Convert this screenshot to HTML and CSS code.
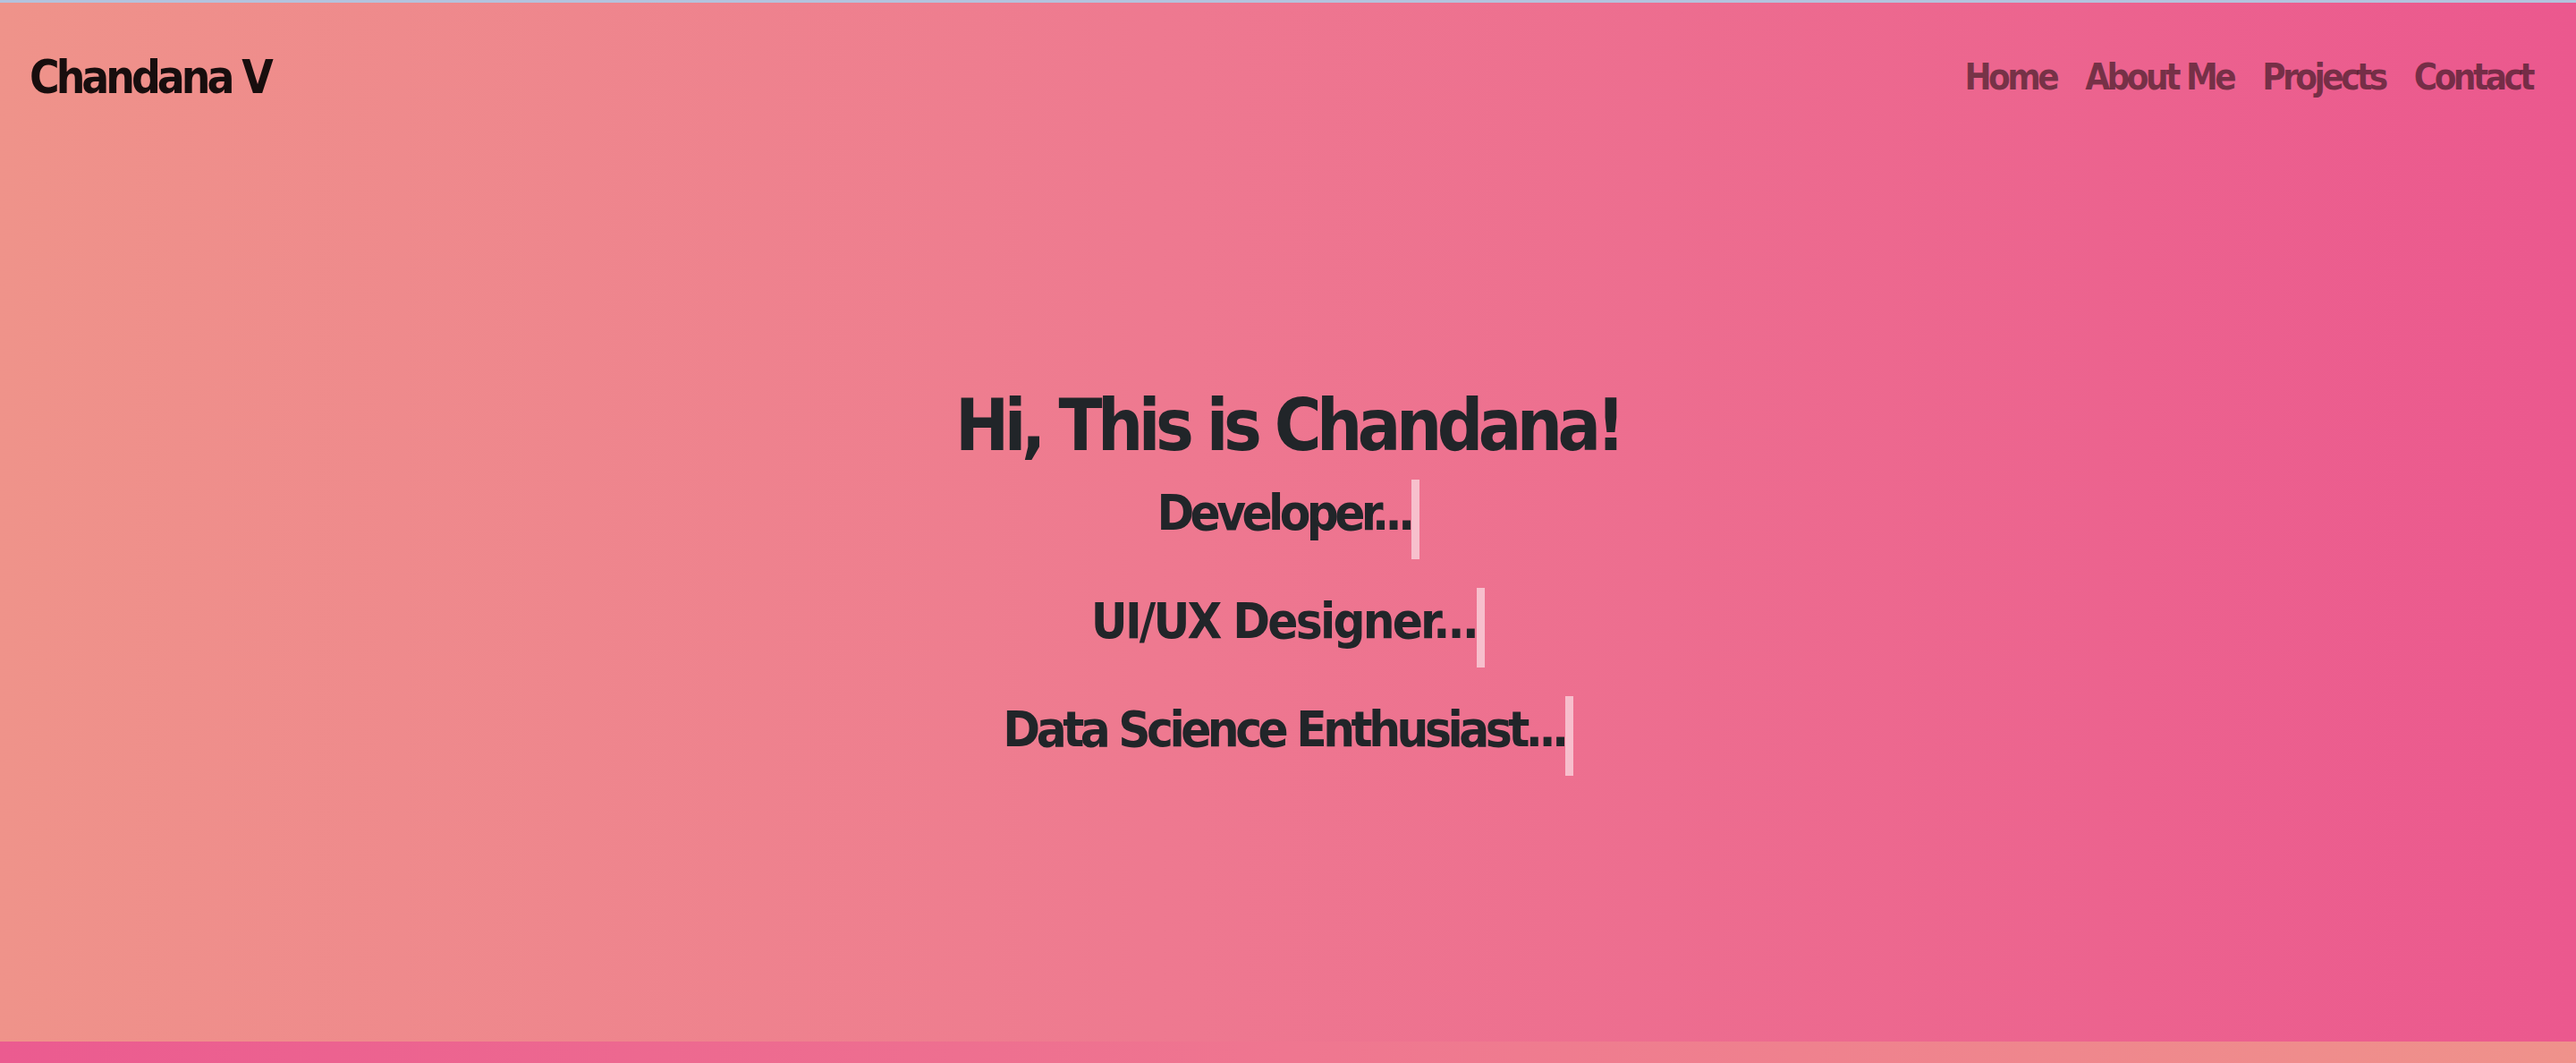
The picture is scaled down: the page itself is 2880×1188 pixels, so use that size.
FILE: index.html
```html
<!DOCTYPE html>
<html lang="en">
<head>
<meta charset="utf-8">
<title>Chandana V</title>
<link rel="stylesheet" href="styles.css">
</head>
<body>
<div class="page">
  <div class="topline"></div>
  <header class="navbar">
    <a class="brand" href="#">Chandana V</a>
    <nav class="nav">
      <a class="nav-link" href="#">Home</a>
      <a class="nav-link" href="#">About Me</a>
      <a class="nav-link" href="#">Projects</a>
      <a class="nav-link" href="#">Contact</a>
    </nav>
  </header>
  <main class="hero">
    <h1 class="hero-title">Hi, This is Chandana!</h1>
    <div class="typed"><span class="typed-text typed-dev">Developer...</span></div>
    <div class="typed"><span class="typed-text typed-ui">UI/UX Designer...</span></div>
    <div class="typed"><span class="typed-text typed-data">Data Science Enthusiast...</span></div>
  </main>
  <div class="next-section"></div>
</div>
</body>
</html>
```

FILE: styles.css
```css
* { box-sizing: border-box; }
html, body { margin: 0; padding: 0; }
body {
  font-family: "DejaVu Sans Condensed", "DejaVu Sans", sans-serif;
  color: #212529;
}
.page {
  height: 1188px;
  display: flex;
  flex-direction: column;
  background: linear-gradient(to right, #ef938a 0%, #ee7990 45%, #eb588e 100%);
  overflow: hidden;
}
.topline {
  height: 3px;
  background: #b3c3de;
  flex: none;
}
.navbar {
  flex: none;
  height: 166px;
  display: flex;
  align-items: center;
  justify-content: space-between;
  padding: 0 49px 0 33px;
}
.brand {
  font-size: 51px;
  font-weight: bold;
  color: rgba(0, 0, 0, 0.9);
  text-decoration: none;
  letter-spacing: -4px;
}
.nav {
  display: flex;
}
.nav-link {
  font-size: 40px;
  font-weight: bold;
  color: rgba(0, 0, 0, 0.5);
  text-decoration: none;
  padding: 0 16px;
  letter-spacing: -3.5px;
}
.nav-link:last-child { padding-right: 0; }
.hero {
  flex: 1;
  display: flex;
  flex-direction: column;
  align-items: center;
  padding-top: 259px;
}
.hero-title {
  margin: 0;
  font-size: 80px;
  font-weight: bold;
  line-height: 96px;
  letter-spacing: -5.5px;
}
.typed {
  margin-top: 32px;
}
.hero-title + .typed { margin-top: 12px; }
.typed-text {
  display: inline-block;
  font-size: 56px;
  font-weight: bold;
  line-height: 67px;
  padding-top: 3px;
  padding-bottom: 19px;
  letter-spacing: -3px;
  border-right: 9px solid rgba(255, 255, 255, 0.55);
}
.typed-dev { letter-spacing: -4.6px; }
.typed-ui { letter-spacing: -2.8px; }
.typed-data { letter-spacing: -4.5px; }
.next-section {
  flex: none;
  height: 24px;
  background: linear-gradient(to right, #eb5b90 0%, #ef7690 50%, #ef928b 100%);
}
```
